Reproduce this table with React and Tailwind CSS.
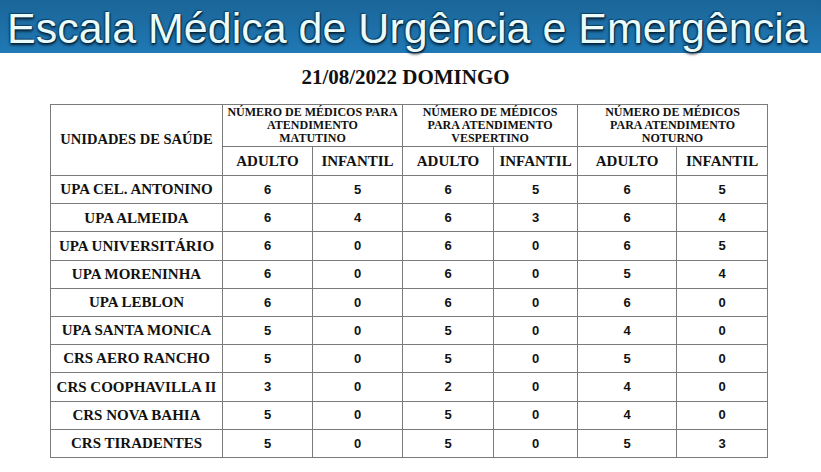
import React from "react";

const rows = [
  ["UPA CEL. ANTONINO", 6, 5, 6, 5, 6, 5],
  ["UPA ALMEIDA", 6, 4, 6, 3, 6, 4],
  ["UPA UNIVERSITÁRIO", 6, 0, 6, 0, 6, 5],
  ["UPA MORENINHA", 6, 0, 6, 0, 5, 4],
  ["UPA LEBLON", 6, 0, 6, 0, 6, 0],
  ["UPA SANTA MONICA", 5, 0, 5, 0, 4, 0],
  ["CRS AERO RANCHO", 5, 0, 5, 0, 5, 0],
  ["CRS COOPHAVILLA II", 3, 0, 2, 0, 4, 0],
  ["CRS NOVA BAHIA", 5, 0, 5, 0, 4, 0],
  ["CRS TIRADENTES", 5, 0, 5, 0, 5, 3],
];

const serif = "[font-family:'Liberation_Serif','Times_New_Roman',serif] font-bold";
const sans = "[font-family:'Liberation_Sans',Arial,sans-serif] font-bold";
const cell = "border border-[#7a7a7a] p-0 text-center align-middle";

export default function App() {
  return (
    <div className="w-[821px] h-[472px] bg-white overflow-hidden">
      {/* banner */}
      <div className="h-[53px] bg-gradient-to-b from-[#1a6598] to-[#2079b5] flex items-center pl-[7px] pt-[3px]">
        <h1 className="[font-family:'Liberation_Sans',Arial,sans-serif] text-[43px] leading-none text-[#e9fbfb] [text-shadow:1px_1px_1px_#06263d,-1px_-1px_1px_#0d3f63,0_2px_3px_#052035] whitespace-nowrap">
          Escala Médica de Urgência e Emergência
        </h1>
      </div>

      {/* date */}
      <div className={`${serif} text-[21px] leading-none text-[#111] text-center mt-[14px] pr-[10px]`}>
        21/08/2022 DOMINGO
      </div>

      {/* table */}
      <div className="pl-[50px] mt-[16px]">
        <table className="border-collapse table-fixed w-[717px] text-[#111] border border-[#666]">
          <colgroup>
            <col className="w-[172px]" />
            <col className="w-[90px]" />
            <col className="w-[90px]" />
            <col className="w-[91px]" />
            <col className="w-[84px]" />
            <col className="w-[99px]" />
            <col className="w-[91px]" />
          </colgroup>
          <thead>
            <tr className="h-[42px]">
              <th rowSpan={2} className={`${cell} ${serif} text-[14.5px]`}>UNIDADES DE SAÚDE</th>
              <th colSpan={2} className={`${cell} ${serif} text-[12px] leading-[13px]`}>
                NÚMERO DE MÉDICOS PARA<br />ATENDIMENTO<br />MATUTINO
              </th>
              <th colSpan={2} className={`${cell} ${serif} text-[12px] leading-[13px]`}>
                NÚMERO DE MÉDICOS<br />PARA ATENDIMENTO<br />VESPERTINO
              </th>
              <th colSpan={2} className={`${cell} ${serif} text-[12px] leading-[13px]`}>
                NÚMERO DE MÉDICOS<br />PARA ATENDIMENTO<br />NOTURNO
              </th>
            </tr>
            <tr className="h-[29px]">
              {["ADULTO", "INFANTIL", "ADULTO", "INFANTIL", "ADULTO", "INFANTIL"].map((t, i) => (
                <th key={i} className={`${cell} ${serif} text-[15px]`}>{t}</th>
              ))}
            </tr>
          </thead>
          <tbody>
            {rows.map(([name, ...nums]) => (
              <tr key={name} className="h-[28.2px]">
                <td className={`${cell} ${serif} text-[15px] whitespace-nowrap`}>{name}</td>
                {nums.map((n, i) => (
                  <td key={i} className={`${cell} ${sans} text-[13px]`}>{n}</td>
                ))}
              </tr>
            ))}
          </tbody>
        </table>
      </div>
    </div>
  );
}
